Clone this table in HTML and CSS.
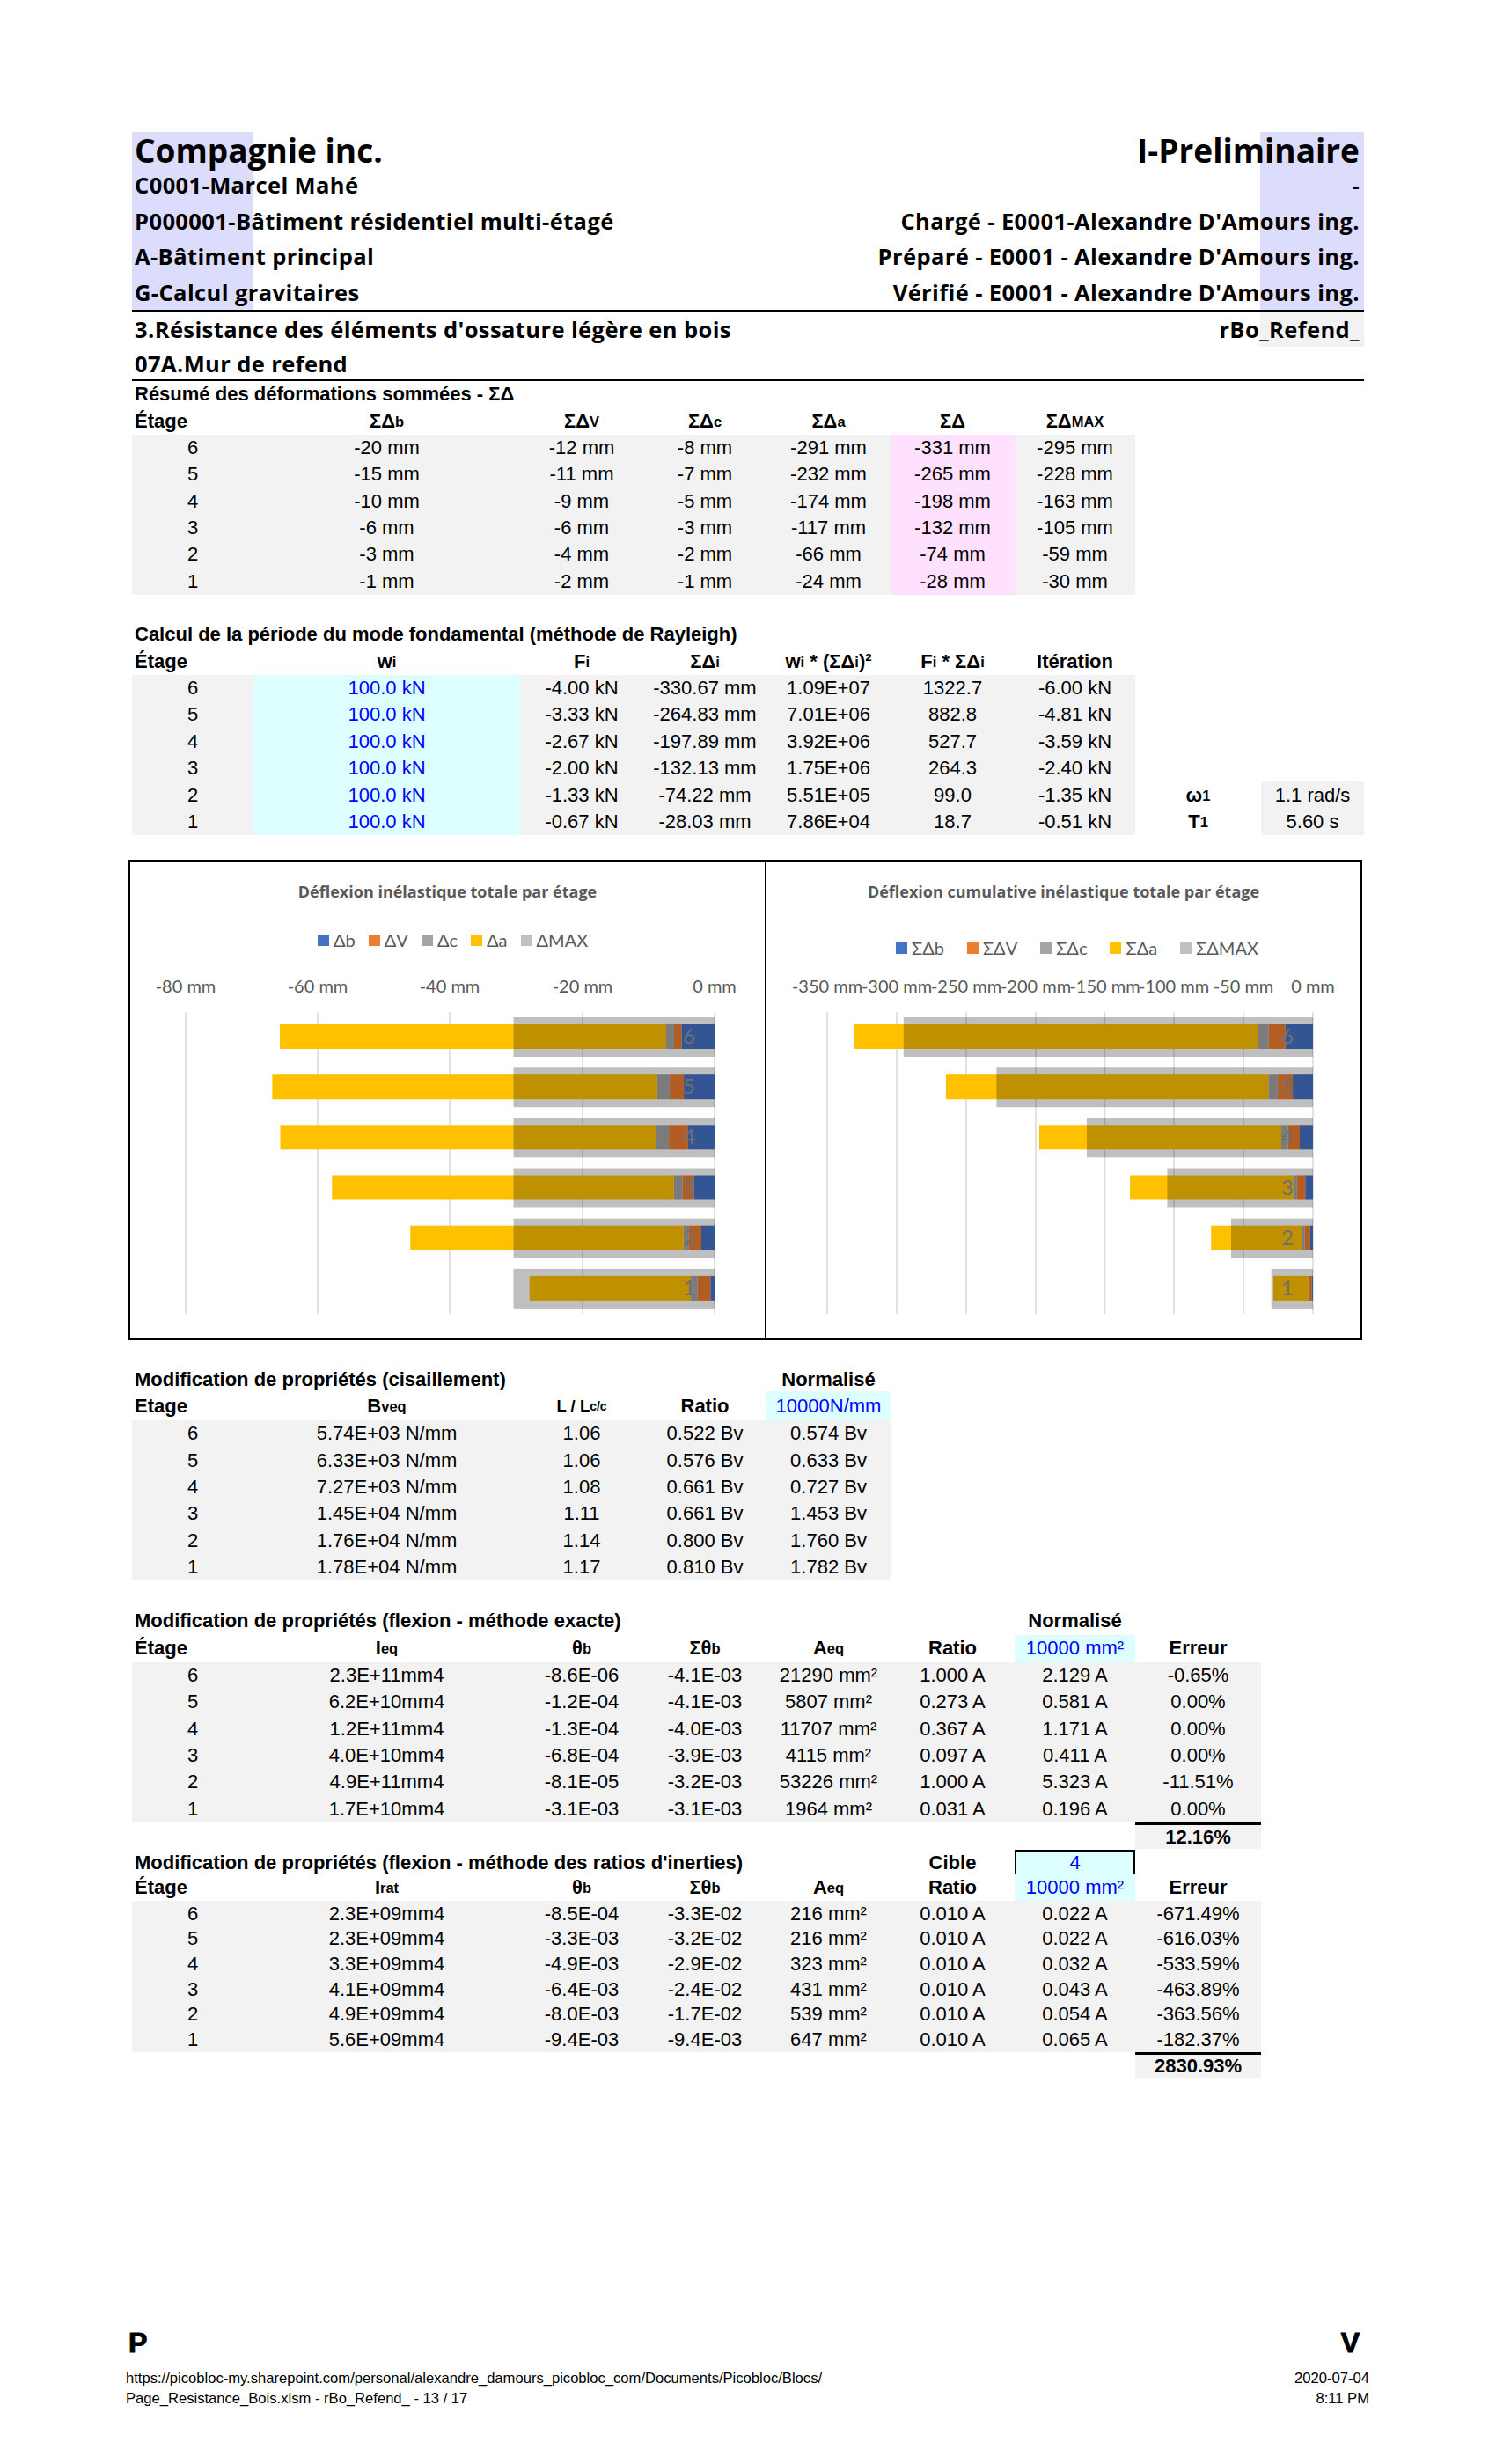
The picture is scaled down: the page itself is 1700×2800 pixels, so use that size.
FILE: index.html
```html
<!DOCTYPE html>
<html lang="fr">
<head>
<meta charset="utf-8">
<title>rBo_Refend_</title>
<link rel="stylesheet" href="styles.css">
</head>
<body>
<div class="page">
  <header class="hdr">
    <div class="hrow big"><span>Compagnie inc.</span><span>I-Preliminaire</span></div>
    <div class="hrow"><span>C0001-Marcel Mahé</span><span>-</span></div>
    <div class="hrow"><span>P000001-Bâtiment résidentiel multi-étagé</span><span>Chargé - E0001-Alexandre D'Amours ing.</span></div>
    <div class="hrow"><span>A-Bâtiment principal</span><span>Préparé - E0001 - Alexandre D'Amours ing.</span></div>
    <div class="hrow"><span>G-Calcul gravitaires</span><span>Vérifié - E0001 - Alexandre D'Amours ing.</span></div>
  </header>
  <div class="sec">
    <div class="hrow s1"><span>3.Résistance des éléments d'ossature légère en bois</span><span>rBo_Refend_</span></div>
    <div class="hrow s2"><span>07A.Mur de refend</span></div>
  </div>

  <section class="tbl t1">
    <div class="row"><span class="title">Résumé des déformations sommées - ΣΔ</span></div>
    <div class="row hd"><span class="lft">Étage</span><span>ΣΔ<sub>b</sub></span><span>ΣΔ<sub>V</sub></span><span>ΣΔ<sub>c</sub></span><span>ΣΔ<sub>a</sub></span><span>ΣΔ</span><span>ΣΔ<sub>MAX</sub></span></div>
    <div class="row g7"><span>6</span><span>-20 mm</span><span>-12 mm</span><span>-8 mm</span><span>-291 mm</span><span class="pk">-331 mm</span><span>-295 mm</span></div>
    <div class="row g7"><span>5</span><span>-15 mm</span><span>-11 mm</span><span>-7 mm</span><span>-232 mm</span><span class="pk">-265 mm</span><span>-228 mm</span></div>
    <div class="row g7"><span>4</span><span>-10 mm</span><span>-9 mm</span><span>-5 mm</span><span>-174 mm</span><span class="pk">-198 mm</span><span>-163 mm</span></div>
    <div class="row g7"><span>3</span><span>-6 mm</span><span>-6 mm</span><span>-3 mm</span><span>-117 mm</span><span class="pk">-132 mm</span><span>-105 mm</span></div>
    <div class="row g7"><span>2</span><span>-3 mm</span><span>-4 mm</span><span>-2 mm</span><span>-66 mm</span><span class="pk">-74 mm</span><span>-59 mm</span></div>
    <div class="row g7"><span>1</span><span>-1 mm</span><span>-2 mm</span><span>-1 mm</span><span>-24 mm</span><span class="pk">-28 mm</span><span>-30 mm</span></div>
  </section>

  <section class="tbl t2">
    <div class="row"><span class="title">Calcul de la période du mode fondamental (méthode de Rayleigh)</span></div>
    <div class="row hd"><span class="lft">Étage</span><span>w<sub>i</sub></span><span>F<sub>i</sub></span><span>ΣΔ<sub>i</sub></span><span>w<sub>i</sub>&nbsp;*&nbsp;(ΣΔ<sub>i</sub>)²</span><span>F<sub>i</sub>&nbsp;*&nbsp;ΣΔ<sub>i</sub></span><span>Itération</span></div>
    <div class="row g7"><span>6</span><span class="cy blue">100.0 kN</span><span>-4.00 kN</span><span>-330.67 mm</span><span>1.09E+07</span><span>1322.7</span><span>-6.00 kN</span></div>
    <div class="row g7"><span>5</span><span class="cy blue">100.0 kN</span><span>-3.33 kN</span><span>-264.83 mm</span><span>7.01E+06</span><span>882.8</span><span>-4.81 kN</span></div>
    <div class="row g7"><span>4</span><span class="cy blue">100.0 kN</span><span>-2.67 kN</span><span>-197.89 mm</span><span>3.92E+06</span><span>527.7</span><span>-3.59 kN</span></div>
    <div class="row g7"><span>3</span><span class="cy blue">100.0 kN</span><span>-2.00 kN</span><span>-132.13 mm</span><span>1.75E+06</span><span>264.3</span><span>-2.40 kN</span></div>
    <div class="row g7"><span>2</span><span class="cy blue">100.0 kN</span><span>-1.33 kN</span><span>-74.22 mm</span><span>5.51E+05</span><span>99.0</span><span>-1.35 kN</span><span class="b">ω<sub>1</sub></span><span class="gr">1.1 rad/s</span></div>
    <div class="row g7"><span>1</span><span class="cy blue">100.0 kN</span><span>-0.67 kN</span><span>-28.03 mm</span><span>7.86E+04</span><span>18.7</span><span>-0.51 kN</span><span class="b">T<sub>1</sub></span><span class="gr">5.60 s</span></div>
  </section>

  <div class="charts">
    <div class="chart left">
      <div class="ctitle">Déflexion inélastique totale par étage</div>
      <div class="legend lg1">
        <span class="li"><i class="sw sb"></i>Δb</span>
        <span class="li"><i class="sw sv"></i>ΔV</span>
        <span class="li"><i class="sw sc"></i>Δc</span>
        <span class="li"><i class="sw sa"></i>Δa</span>
        <span class="li"><i class="sw smx"></i>ΔMAX</span>
      </div>
      <svg class="plot" width="721" height="421" viewBox="0 0 721 421">
        <text class="ax" x="63" y="28">-80 mm</text>
        <text class="ax" x="213" y="28">-60 mm</text>
        <text class="ax" x="363" y="28">-40 mm</text>
        <text class="ax" x="514" y="28">-20 mm</text>
        <text class="ax" x="664" y="28">0 mm</text>
        <g class="grid">
          <line x1="63" y1="50" x2="63" y2="393"/>
          <line x1="213" y1="50" x2="213" y2="393"/>
          <line x1="363" y1="50" x2="363" y2="393"/>
          <line x1="514" y1="50" x2="514" y2="393"/>
          <line x1="664" y1="50" x2="664" y2="393"/>
        </g>
        <g>
          <rect class="fb" x="626.4" y="64" width="37.6" height="28"/>
          <rect class="fv" x="617.9" y="64" width="8.5" height="28"/>
          <rect class="fc" x="608.9" y="64" width="9" height="28"/>
          <rect class="fa" x="170" y="64" width="438.9" height="28"/>
          <rect class="fm" x="435.5" y="56" width="228.5" height="45"/>
          <text class="dl" x="635" y="86">6</text>

          <rect class="fb" x="629.1" y="121.2" width="34.9" height="28"/>
          <rect class="fv" x="613.1" y="121.2" width="16" height="28"/>
          <rect class="fc" x="598.8" y="121.2" width="14.3" height="28"/>
          <rect class="fa" x="161.4" y="121.2" width="437.4" height="28"/>
          <rect class="fm" x="435.5" y="113.2" width="228.5" height="45"/>
          <text class="dl" x="635" y="143.2">5</text>

          <rect class="fb" x="633.9" y="178.3" width="30.1" height="28"/>
          <rect class="fv" x="612.1" y="178.3" width="21.8" height="28"/>
          <rect class="fc" x="597.4" y="178.3" width="14.7" height="28"/>
          <rect class="fa" x="170.5" y="178.3" width="426.9" height="28"/>
          <rect class="fm" x="435.5" y="170.3" width="228.5" height="45"/>
          <text class="dl" x="635" y="200.3">4</text>

          <rect class="fb" x="640.4" y="235.5" width="23.6" height="28"/>
          <rect class="fv" x="627.6" y="235.5" width="12.8" height="28"/>
          <rect class="fc" x="617.8" y="235.5" width="9.8" height="28"/>
          <rect class="fa" x="229.3" y="235.5" width="388.5" height="28"/>
          <rect class="fm" x="435.5" y="227.5" width="228.5" height="45"/>
          <text class="dl" x="635" y="257.5">3</text>

          <rect class="fb" x="649" y="292.7" width="15" height="28"/>
          <rect class="fv" x="634.3" y="292.7" width="14.7" height="28"/>
          <rect class="fc" x="628.7" y="292.7" width="5.6" height="28"/>
          <rect class="fa" x="318.3" y="292.7" width="310.4" height="28"/>
          <rect class="fm" x="435.5" y="284.7" width="228.5" height="45"/>
          <text class="dl" x="635" y="314.7">2</text>

          <rect class="fb" x="659.3" y="349.9" width="4.7" height="28"/>
          <rect class="fv" x="644.6" y="349.9" width="14.7" height="28"/>
          <rect class="fc" x="637.1" y="349.9" width="7.5" height="28"/>
          <rect class="fa" x="453.7" y="349.9" width="183.4" height="28"/>
          <rect class="fm" x="435.5" y="341.9" width="228.5" height="45"/>
          <text class="dl" x="635" y="371.9">1</text>
        </g>
      </svg>
    </div>
    <div class="chart right">
      <div class="ctitle">Déflexion cumulative inélastique totale par étage</div>
      <div class="legend lg2">
        <span class="li"><i class="sw sb"></i>ΣΔb</span>
        <span class="li"><i class="sw sv"></i>ΣΔV</span>
        <span class="li"><i class="sw sc"></i>ΣΔc</span>
        <span class="li"><i class="sw sa"></i>ΣΔa</span>
        <span class="li"><i class="sw smx"></i>ΣΔMAX</span>
      </div>
      <svg class="plot" width="675" height="421" viewBox="0 0 675 421">
        <text class="ax" x="69" y="28">-350 mm</text>
        <text class="ax" x="148" y="28">-300 mm</text>
        <text class="ax" x="227" y="28">-250 mm</text>
        <text class="ax" x="306" y="28">-200 mm</text>
        <text class="ax" x="384.5" y="28">-150 mm</text>
        <text class="ax" x="463" y="28">-100 mm</text>
        <text class="ax" x="542" y="28">-50 mm</text>
        <text class="ax" x="621" y="28">0 mm</text>
        <g class="grid">
          <line x1="69" y1="50" x2="69" y2="393"/>
          <line x1="148" y1="50" x2="148" y2="393"/>
          <line x1="227" y1="50" x2="227" y2="393"/>
          <line x1="306" y1="50" x2="306" y2="393"/>
          <line x1="384.5" y1="50" x2="384.5" y2="393"/>
          <line x1="463" y1="50" x2="463" y2="393"/>
          <line x1="542" y1="50" x2="542" y2="393"/>
          <line x1="621" y1="50" x2="621" y2="393"/>
        </g>
        <g>
          <rect class="fb" x="589.5" y="64" width="31.5" height="28"/>
          <rect class="fv" x="570.6" y="64" width="18.9" height="28"/>
          <rect class="fc" x="558" y="64" width="12.6" height="28"/>
          <rect class="fa" x="99.1" y="64" width="458.9" height="28"/>
          <rect class="fm" x="155.8" y="56" width="465.2" height="45"/>
          <text class="dl" x="592" y="86">6</text>

          <rect class="fb" x="598.1" y="121.2" width="22.9" height="28"/>
          <rect class="fv" x="581.1" y="121.2" width="17" height="28"/>
          <rect class="fc" x="570.4" y="121.2" width="10.7" height="28"/>
          <rect class="fa" x="203.9" y="121.2" width="366.5" height="28"/>
          <rect class="fm" x="261.4" y="113.2" width="359.6" height="45"/>
          <text class="dl" x="592" y="143.2">5</text>

          <rect class="fb" x="606" y="178.3" width="15" height="28"/>
          <rect class="fv" x="592.6" y="178.3" width="13.4" height="28"/>
          <rect class="fc" x="585" y="178.3" width="7.6" height="28"/>
          <rect class="fa" x="310" y="178.3" width="275" height="28"/>
          <rect class="fm" x="363.9" y="170.3" width="257.1" height="45"/>
          <text class="dl" x="592" y="200.3">4</text>

          <rect class="fb" x="612.3" y="235.5" width="8.7" height="28"/>
          <rect class="fv" x="602.8" y="235.5" width="9.5" height="28"/>
          <rect class="fc" x="598.4" y="235.5" width="4.4" height="28"/>
          <rect class="fa" x="413.1" y="235.5" width="185.3" height="28"/>
          <rect class="fm" x="455.4" y="227.5" width="165.6" height="45"/>
          <text class="dl" x="592" y="257.5">3</text>

          <rect class="fb" x="617.8" y="292.7" width="3.2" height="28"/>
          <rect class="fv" x="611.5" y="292.7" width="6.3" height="28"/>
          <rect class="fc" x="608.3" y="292.7" width="3.2" height="28"/>
          <rect class="fa" x="505.2" y="292.7" width="103.1" height="28"/>
          <rect class="fm" x="528" y="284.7" width="93" height="45"/>
          <text class="dl" x="592" y="314.7">2</text>

          <rect class="fb" x="619.7" y="349.9" width="1.3" height="28"/>
          <rect class="fv" x="617" y="349.9" width="2.7" height="28"/>
          <rect class="fc" x="615.7" y="349.9" width="1.3" height="28"/>
          <rect class="fa" x="576" y="349.9" width="39.7" height="28"/>
          <rect class="fm" x="573.7" y="341.9" width="47.3" height="45"/>
          <text class="dl" x="592" y="371.9">1</text>
        </g>
      </svg>
    </div>
  </div>

  <section class="tbl t3">
    <div class="row ttl3"><span class="title">Modification de propriétés (cisaillement)</span><span class="b c5">Normalisé</span></div>
    <div class="row hd hd3"><span class="lft">Etage</span><span>B<sub>veq</sub></span><span class="small">L / L<sub>c/c</sub></span><span>Ratio</span><span class="cy blue nb">10000N/mm</span></div>
    <div class="row g5"><span>6</span><span>5.74E+03 N/mm</span><span>1.06</span><span>0.522 Bv</span><span>0.574 Bv</span></div>
    <div class="row g5"><span>5</span><span>6.33E+03 N/mm</span><span>1.06</span><span>0.576 Bv</span><span>0.633 Bv</span></div>
    <div class="row g5"><span>4</span><span>7.27E+03 N/mm</span><span>1.08</span><span>0.661 Bv</span><span>0.727 Bv</span></div>
    <div class="row g5"><span>3</span><span>1.45E+04 N/mm</span><span>1.11</span><span>0.661 Bv</span><span>1.453 Bv</span></div>
    <div class="row g5"><span>2</span><span>1.76E+04 N/mm</span><span>1.14</span><span>0.800 Bv</span><span>1.760 Bv</span></div>
    <div class="row g5"><span>1</span><span>1.78E+04 N/mm</span><span>1.17</span><span>0.810 Bv</span><span>1.782 Bv</span></div>
  </section>

  <section class="tbl t4">
    <div class="row ttl4"><span class="title">Modification de propriétés (flexion - méthode exacte)</span><span class="b c7">Normalisé</span></div>
    <div class="row hd hd4"><span class="lft">Étage</span><span>I<sub>eq</sub></span><span>θ<sub>b</sub></span><span>Σθ<sub>b</sub></span><span>A<sub>eq</sub></span><span>Ratio</span><span class="cy blue nb">10000 mm²</span><span>Erreur</span></div>
    <div class="row g8"><span>6</span><span>2.3E+11mm4</span><span>-8.6E-06</span><span>-4.1E-03</span><span>21290 mm²</span><span>1.000 A</span><span>2.129 A</span><span>-0.65%</span></div>
    <div class="row g8"><span>5</span><span>6.2E+10mm4</span><span>-1.2E-04</span><span>-4.1E-03</span><span>5807 mm²</span><span>0.273 A</span><span>0.581 A</span><span>0.00%</span></div>
    <div class="row g8"><span>4</span><span>1.2E+11mm4</span><span>-1.3E-04</span><span>-4.0E-03</span><span>11707 mm²</span><span>0.367 A</span><span>1.171 A</span><span>0.00%</span></div>
    <div class="row g8"><span>3</span><span>4.0E+10mm4</span><span>-6.8E-04</span><span>-3.9E-03</span><span>4115 mm²</span><span>0.097 A</span><span>0.411 A</span><span>0.00%</span></div>
    <div class="row g8"><span>2</span><span>4.9E+11mm4</span><span>-8.1E-05</span><span>-3.2E-03</span><span>53226 mm²</span><span>1.000 A</span><span>5.323 A</span><span>-11.51%</span></div>
    <div class="row g8"><span>1</span><span>1.7E+10mm4</span><span>-3.1E-03</span><span>-3.1E-03</span><span>1964 mm²</span><span>0.031 A</span><span>0.196 A</span><span>0.00%</span></div>
    <div class="row tot"><span class="total">12.16%</span></div>
  </section>

  <section class="tbl t5">
    <div class="row ttl5"><span class="title">Modification de propriétés (flexion - méthode des ratios d'inerties)</span><span class="b c6">Cible</span><span class="cy blue target">4</span></div>
    <div class="row hd hd5"><span class="lft">Étage</span><span>I<sub>rat</sub></span><span>θ<sub>b</sub></span><span>Σθ<sub>b</sub></span><span>A<sub>eq</sub></span><span>Ratio</span><span class="cy blue nb">10000 mm²</span><span>Erreur</span></div>
    <div class="row g8 r5"><span>6</span><span>2.3E+09mm4</span><span>-8.5E-04</span><span>-3.3E-02</span><span>216 mm²</span><span>0.010 A</span><span>0.022 A</span><span>-671.49%</span></div>
    <div class="row g8 r5"><span>5</span><span>2.3E+09mm4</span><span>-3.3E-03</span><span>-3.2E-02</span><span>216 mm²</span><span>0.010 A</span><span>0.022 A</span><span>-616.03%</span></div>
    <div class="row g8 r5"><span>4</span><span>3.3E+09mm4</span><span>-4.9E-03</span><span>-2.9E-02</span><span>323 mm²</span><span>0.010 A</span><span>0.032 A</span><span>-533.59%</span></div>
    <div class="row g8 r5"><span>3</span><span>4.1E+09mm4</span><span>-6.4E-03</span><span>-2.4E-02</span><span>431 mm²</span><span>0.010 A</span><span>0.043 A</span><span>-463.89%</span></div>
    <div class="row g8 r5"><span>2</span><span>4.9E+09mm4</span><span>-8.0E-03</span><span>-1.7E-02</span><span>539 mm²</span><span>0.010 A</span><span>0.054 A</span><span>-363.56%</span></div>
    <div class="row g8 r5"><span>1</span><span>5.6E+09mm4</span><span>-9.4E-03</span><span>-9.4E-03</span><span>647 mm²</span><span>0.010 A</span><span>0.065 A</span><span>-182.37%</span></div>
    <div class="row tot tot5"><span class="total">2830.93%</span></div>
  </section>

  <footer class="foot">
    <div class="fmarks"><span>P</span><span>V</span></div>
    <div class="finfo">
      <div>https://picobloc-my.sharepoint.com/personal/alexandre_damours_picobloc_com/Documents/Picobloc/Blocs/<br>Page_Resistance_Bois.xlsm - rBo_Refend_ - 13 / 17</div>
      <div class="fdate">2020-07-04<br>8:11 PM</div>
    </div>
  </footer>
</div>
</body>
</html>
```

FILE: styles.css
```css
* { box-sizing: border-box; margin: 0; padding: 0; }
html, body { background: #fff; }
body {
  margin: 0;
  width: 1700px;
  height: 2800px;
  font-family: "Liberation Sans", Arial, sans-serif;
  color: #000;
}
.page {
  width: 1400px;
  margin-left: 150px;
  padding-top: 150px;
}

/* ---------- header ---------- */
.hdr {
  font-family: "Open Sans", "Noto Sans", sans-serif;
  font-weight: 700;
  background: linear-gradient(to right, #dcdcfd 0 138px, transparent 138px 1282px, #dcdcfd 1282px);
  border-bottom: 2px solid #000;
}
.hrow {
  display: flex;
  justify-content: space-between;
  align-items: center;
  height: 40.5px;
  padding: 0 5px 0 3px;
  font-size: 25.5px;
  letter-spacing: 0.4px;
  white-space: nowrap;
}
.hrow.big { height: 40px; font-size: 37px; letter-spacing: 0; }
.sec {
  font-family: "Open Sans", "Noto Sans", sans-serif;
  font-weight: 700;
  border-bottom: 2px solid #000;
}
.sec .s1 {
  height: 40px;
  background: linear-gradient(to right, transparent 1282px, #f2f2f2 1282px);
}
.sec .s2 { height: 37px; }

/* ---------- spreadsheet tables ---------- */
.row {
  display: grid;
  grid-template-columns: 138px 303px 140px 140px 141px 141px 137px 143px 117px;
  height: 30.36px;
  font-size: 22px;
  white-space: nowrap;
}
.row > span {
  display: flex;
  align-items: center;
  justify-content: center;
}
.row .title {
  grid-column: 1 / 6;
  justify-content: flex-start;
  padding-left: 3px;
  font-weight: 700;
}
.t3 .row .title { grid-column: 1 / 5; }
.hd { font-weight: 700; }
.hd .lft { justify-content: flex-start; padding-left: 3px; }
sub {
  font-size: 0.75em;
  vertical-align: -0.3em;
  line-height: 0;
}
.g7 { background: linear-gradient(to right, #f2f2f2 0 1140px, transparent 1140px); }
.g5 { background: linear-gradient(to right, #f2f2f2 0 862px, transparent 862px); }
.g8 { background: linear-gradient(to right, #f2f2f2 0 1283px, transparent 1283px); }
.pk { background: #ffe0ff; }
.cy { background: #ddffff; }
.blue { color: #0000ff; }
.gr { background: #f2f2f2; }
.b { font-weight: 700; }
.nb { font-weight: 400; }
.small { font-size: 18.5px; }

.t2 { margin-top: 30.36px; }

.t3 { margin-top: 32px; }
.ttl3 { height: 26px; }
.hd3 { height: 33px; }
.c5 { grid-column: 5; }

.t4 { margin-top: 30.5px; }
.ttl4 { height: 31px; }
.hd4 { height: 31px; }
.c7 { grid-column: 7; }
.tot .total {
  grid-column: 8;
  font-weight: 700;
  background: #f2f2f2;
  border-top: 3px solid #000;
}

.ttl5 { height: 29px; }
.c6 { grid-column: 6; }
.target {
  grid-column: 7;
  border: 2px solid #000;
  margin: 1px 0;
  font-weight: 400;
}
.hd5 { height: 30px; }
.r5 { height: 28.67px; }
.tot5 { height: 29px; }

/* ---------- charts ---------- */
.charts {
  display: flex;
  width: 1402px;
  height: 546px;
  margin: 28px 0 0 -4px;
  border: 2px solid #000;
  font-family: Lato, "Noto Sans", sans-serif;
  color: #595959;
}
.chart { display: flex; flex-direction: column; }
.chart.left { width: 723px; border-right: 2px solid #000; }
.chart.right { width: 675px; }
.ctitle {
  margin-top: 22px;
  height: 24px;
  line-height: 24px;
  text-align: center;
  font-family: "Open Sans", "Noto Sans", sans-serif;
  font-size: 18px;
  font-weight: 700;
}
.legend {
  display: flex;
  align-items: center;
  height: 24px;
  font-size: 20px;
}
.lg1 { margin-top: 31px; padding-left: 213px; gap: 15px; }
.lg2 { margin-top: 40px; padding-left: 147px; gap: 26px; }
.li { display: flex; align-items: center; }
.sw { display: inline-block; width: 13px; height: 13px; margin-right: 5px; }
.sb { background: #4472c4; }
.sv { background: #ed7d31; }
.sc { background: #a5a5a5; }
.sa { background: #ffc000; }
.smx { background: #c0c0c0; }
.plot { display: block; }
.lg1 + .plot { margin-top: 20px; }
.lg2 + .plot { margin-top: 11px; }
.ax { font-family: Lato, "Noto Sans", sans-serif; font-size: 20px; fill: #595959; text-anchor: middle; }
.grid line { stroke: #d9d9d9; stroke-width: 1.5; }
.fb { fill: #4472c4; }
.fv { fill: #ed7d31; }
.fc { fill: #a5a5a5; }
.fa { fill: #ffc000; }
.fm { fill: rgba(0, 0, 0, 0.25); }
.dl { font-family: Lato, "Noto Sans", sans-serif; font-size: 24px; fill: #707070; text-anchor: middle; }

/* ---------- footer ---------- */
.foot {
  margin: 283px 0 0 -7px;
  width: 1413px;
}
.fmarks {
  display: flex;
  justify-content: space-between;
  height: 36px;
  align-items: center;
  padding: 0 11px 0 3px;
  font-size: 32px;
  font-weight: 700;
  -webkit-text-stroke: 1px #000;
}
.finfo {
  margin-top: 10.5px;
  display: flex;
  justify-content: space-between;
  font-size: 16.6px;
  line-height: 23px;
}
.fdate { text-align: right; }
```
